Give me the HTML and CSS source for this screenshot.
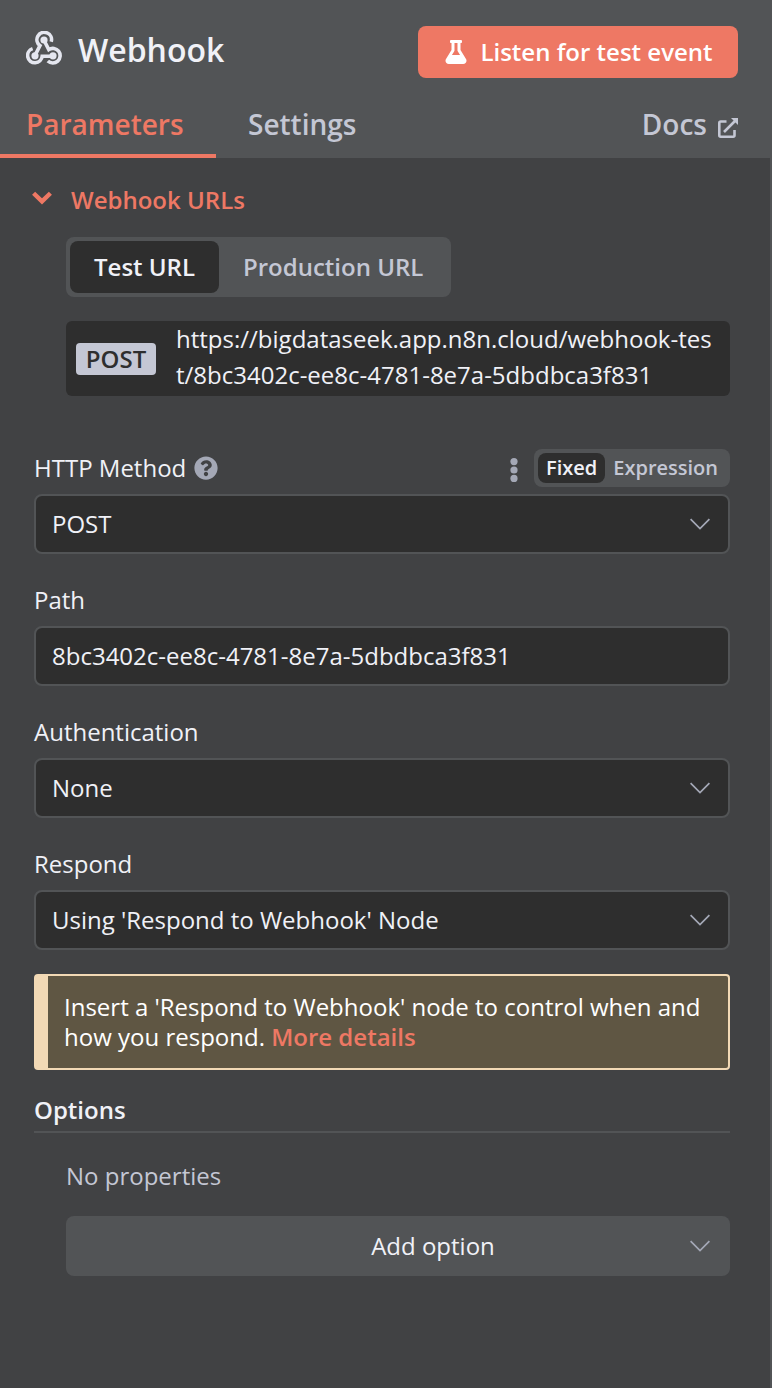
FILE: index.html
```html
<!DOCTYPE html>
<html lang="en">
<head>
<meta charset="utf-8">
<title>Webhook</title>
<link rel="stylesheet" href="styles.css">
</head>
<body>
<main class="panel">
  <header class="header">
    <div class="title-row">
      <svg class="node-icon" width="36" height="34" viewBox="0 0 36 34" fill="none" stroke="currentColor" stroke-width="3.6">
        <path d="M25.2 10.8A7.3 7.3 0 1 0 14 14.6L9.4 23.6"/>
        <path d="M6.6 17.6A7.3 7.3 0 1 0 16.2 25.2H26.5"/>
        <path d="M18 9.2L22.8 18.6A7.3 7.3 0 1 1 21.8 30"/>
        <g fill="currentColor" stroke="none"><circle cx="18" cy="9" r="3.6"/><circle cx="9" cy="24.8" r="3.6"/><circle cx="27" cy="24.8" r="3.6"/></g>
      </svg>
      <h1 class="title">Webhook</h1>
      <button class="listen">
        <svg width="22" height="24" viewBox="0 0 448 512" fill="currentColor"><path d="M437.2 403.5L320 215V64h8c13.3 0 24-10.7 24-24V24c0-13.3-10.7-24-24-24H120c-13.3 0-24 10.7-24 24v16c0 13.3 10.7 24 24 24h8v151L10.8 403.5C-18.5 450.6 15.3 512 70.9 512h306.2c55.7 0 89.4-61.5 60.1-108.5zM137.9 320l48.2-77.6c3.7-5.2 5.8-11.6 5.8-18.4V64h64v160c0 6.9 2.2 13.2 5.8 18.4l48.2 77.6h-172z"/></svg>
        <span>Listen for test event</span>
      </button>
    </div>
    <nav class="tabs">
      <a class="tab active">Parameters</a>
      <a class="tab">Settings</a>
      <a class="tab docs">Docs
        <svg width="20" height="20" viewBox="0 0 20 20" fill="none" stroke="currentColor" stroke-width="2.6"><path d="M8.5 3.5H2.7Q1.3 3.5 1.3 4.9V17.3Q1.3 18.7 2.7 18.7H15.1Q16.5 18.7 16.5 17.3V12M6 14L18 2"/><path d="M13 0H20V7Z" fill="currentColor" stroke="none"/></svg>
      </a>
    </nav>
  </header>

  <section class="urls">
    <div class="urls-title">
      <svg width="20" height="14" viewBox="0 0 20 14" fill="none" stroke="currentColor" stroke-width="4.4"><path d="M1.6 2.2L10 10.4L18.4 2.2"/></svg>
      <span>Webhook URLs</span>
    </div>
    <div class="url-switch"><span class="on">Test URL</span><span>Production URL</span></div>
    <div class="url-box">
      <span class="method">POST</span>
      <span class="url">https://bigdataseek.app.n8n.cloud/webhook-test/8bc3402c-ee8c-4781-8e7a-5dbdbca3f831</span>
    </div>
  </section>

  <section class="fields">
    <div class="field">
      <div class="label">
        <span>HTTP Method</span>
        <svg class="help" width="24" height="24" viewBox="0 0 512 512" fill="currentColor"><path d="M504 256c0 136.997-111.043 248-248 248S8 392.997 8 256C8 119.083 119.043 8 256 8s248 111.083 248 248zM262.655 90c-54.497 0-89.255 22.957-116.549 63.758-3.536 5.286-2.353 12.415 2.715 16.258l34.699 26.31c5.205 3.947 12.621 3.008 16.665-2.122 17.864-22.658 30.113-35.797 57.303-35.797 20.429 0 45.698 13.148 45.698 32.958 0 14.976-12.363 22.667-32.534 33.976C247.128 238.528 216 254.941 216 296v4c0 6.627 5.373 12 12 12h56c6.627 0 12-5.373 12-12v-1.333c0-28.462 83.186-29.647 83.186-106.667 0-58.002-60.165-102-116.531-102zM256 338c-25.365 0-46 20.635-46 46 0 25.364 20.635 46 46 46s46-20.636 46-46c0-25.364-20.635-46-46-46z"/></svg>
        <svg class="dots" width="8" height="24" viewBox="0 0 8 24" fill="currentColor"><circle cx="4" cy="3.6" r="3.6"/><circle cx="4" cy="12" r="3.6"/><circle cx="4" cy="20.4" r="3.6"/></svg>
        <div class="mode"><span class="on">Fixed</span><span>Expression</span></div>
      </div>
      <div class="input"><span>POST</span><svg class="caret" width="20" height="12" viewBox="0 0 20 12"><path d="M.6 1.2L10 10.6L19.4 1.2"/></svg></div>
    </div>
    <div class="field">
      <div class="label"><span>Path</span></div>
      <div class="input"><span>8bc3402c-ee8c-4781-8e7a-5dbdbca3f831</span></div>
    </div>
    <div class="field">
      <div class="label"><span>Authentication</span></div>
      <div class="input"><span>None</span><svg class="caret" width="20" height="12" viewBox="0 0 20 12"><path d="M.6 1.2L10 10.6L19.4 1.2"/></svg></div>
    </div>
    <div class="field">
      <div class="label"><span>Respond</span></div>
      <div class="input"><span>Using 'Respond to Webhook' Node</span><svg class="caret" width="20" height="12" viewBox="0 0 20 12"><path d="M.6 1.2L10 10.6L19.4 1.2"/></svg></div>
    </div>
  </section>

  <aside class="notice">Insert a 'Respond to Webhook' node to control when and how you respond. <a class="more">More details</a></aside>

  <section class="options">
    <h2 class="options-title">Options</h2>
    <p class="empty">No properties</p>
    <div class="add"><span>Add option</span><svg class="caret" width="20" height="12" viewBox="0 0 20 12"><path d="M.6 1.2L10 10.6L19.4 1.2"/></svg></div>
  </section>
</main>
</body>
</html>
```
FILE: styles.css
```css
* { box-sizing: border-box; }
body {
  margin: 0;
  background: #414244;
  color: #f0f1f7;
  font: 400 24px/32px "Open Sans", "Noto Sans", sans-serif;
}
svg { display: block; flex: none; }
.panel { height: 1388px; border-right: 2px solid #525456; overflow: hidden; }

.header { height: 158px; padding-top: 26px; background: #525456; }
.title-row { display: flex; align-items: center; height: 52px; padding: 0 32px 0 26px; }
.node-icon { margin-bottom: 8px; color: #e4e6ef; }
.title { margin: 0 0 4px 16px; font-size: 32px; font-weight: 600; line-height: 40px; }
.listen {
  display: flex; align-items: center; justify-content: center; gap: 13px;
  width: 320px; height: 52px; margin-left: auto; padding: 0 0 0 2px;
  border: 0; border-radius: 8px; background: #ee7864; color: #fff;
  font: 600 24px/32px "Open Sans", sans-serif;
}
.tabs { display: flex; height: 80px; padding-right: 32px; font-size: 28px; font-weight: 600; line-height: 40px; color: #c4c7d4; }
.tab { height: 80px; padding: 26px 32px 0; }
.tab.active { width: 216px; padding-left: 26px; border-bottom: 4px solid #ee7864; color: #ee7864; }
.tab.docs { display: flex; gap: 11px; margin-left: auto; padding-right: 0; }
.docs svg { margin-top: 14px; }

.urls { padding: 26px 40px 0 66px; }
.urls-title { display: flex; gap: 19px; margin-left: -34px; color: #ee7864; font-weight: 600; }
.urls-title svg { margin-top: 7px; }
.url-switch { display: flex; width: 385px; height: 60px; margin-top: 21px; padding: 4px; border-radius: 8px; background: #525456; font-weight: 600; line-height: 52px; white-space: nowrap; color: #c4c7d4; }
.url-switch span { flex: none; padding: 0 24px; border-radius: 8px; }
.url-switch .on, .mode .on { background: #2e2e2e; color: #f0f1f7; }
.url-box { display: flex; align-items: center; gap: 20px; height: 75px; margin-top: 24px; padding: 0 10px; border-radius: 6px; background: #2e2e2e; }
.method { flex: none; width: 80px; height: 32px; border-radius: 4px; background: #c4c7d4; color: #2e2e2e; font-weight: 600; text-align: center; }
.url { width: 540px; padding-bottom: 3px; line-height: 36px; word-break: break-all; }

.fields { display: flex; flex-direction: column; gap: 24px; padding: 46px 40px 0 34px; }
.field { height: 108px; }
.fields .field:first-child { height: 112px; }
.label { display: flex; align-items: center; height: 48px; padding-bottom: 4px; }
.fields .field:first-child .label { height: 52px; padding-bottom: 0; }
.help { margin-left: 8px; color: #a4a8b6; }
.dots { margin: 4px 16px 0 auto; color: #a4a8b6; }
.mode { display: flex; height: 38px; padding: 4px; border-radius: 8px; background: #525456; font-size: 20px; font-weight: 600; line-height: 30px; color: #c4c7d4; }
.mode span { padding: 0 8px; border-radius: 8px; }
.input { display: flex; align-items: center; justify-content: space-between; height: 60px; padding: 0 18px 0 16px; border: 2px solid #525456; border-radius: 8px; background: #2e2e2e; }
.caret { fill: none; stroke: #a4a8b6; stroke-width: 1.7; }

.notice { height: 96px; margin: 24px 40px 0 34px; padding: 16px 20px 0 16px; border: 2px solid #f2d9b5; border-left-width: 14px; border-radius: 4px; background: #5f5643; color: #fff; line-height: 30px; }
.more { color: #ee7864; font-weight: 600; }

.options { padding: 24px 40px 0 34px; }
.options-title { height: 39px; margin: 0; border-bottom: 2px solid #525456; font-size: 24px; font-weight: 600; line-height: 32px; }
.empty { margin: 27px 0 0 32px; color: #c4c7d4; }
.add { display: flex; align-items: center; height: 60px; margin: 24px 0 0 32px; padding: 0 20px 0 90px; border-radius: 8px; background: #525456; }
.add span { flex: 1; text-align: center; padding-left: 20px; }
```
